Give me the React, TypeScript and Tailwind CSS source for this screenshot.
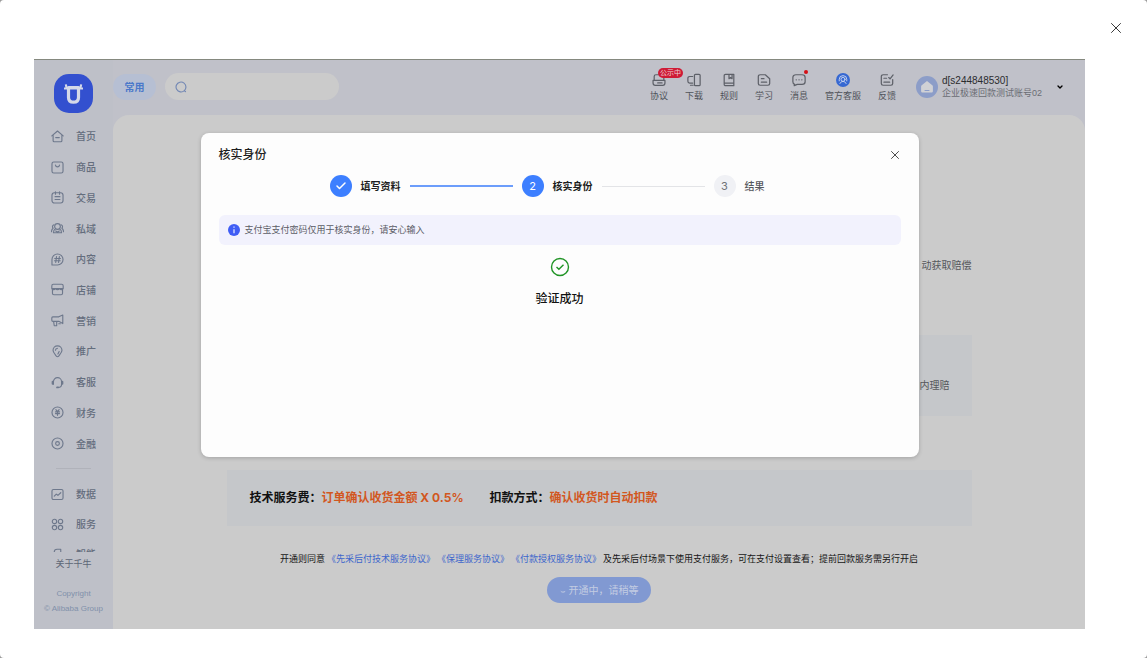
import React from 'react';
import { X, Check, ChevronDown } from 'lucide-react';

interface NavItem {
  label: string;
  icon: React.ReactNode;
}

interface Tool {
  label: string;
  icon: React.ReactNode;
  badge?: string;
  dot?: boolean;
}

const Line: React.FC<{ className?: string; children: React.ReactNode }> = ({ className, children }) => (
  <svg
    viewBox="0 0 16 16"
    fill="none"
    stroke="currentColor"
    strokeWidth="1.4"
    strokeLinecap="round"
    strokeLinejoin="round"
    className={className}
    aria-hidden="true"
  >
    {children}
  </svg>
);

const mainNav: NavItem[] = [
  { label: '首页', icon: <path d="M1 7.2 8 1.2l7 6M2.6 6v7.2c0 .8.6 1.3 1.3 1.3h8.2c.7 0 1.3-.5 1.3-1.3V6M5.8 9.3h4.4" /> },
  { label: '商品', icon: <><rect x="1.2" y="1.2" width="13.6" height="13.6" rx="2.2" /><path d="M5.5 5c.3 1.6 1.2 2.3 2.5 2.3S10.2 6.6 10.5 5" /></> },
  { label: '交易', icon: <><rect x="1.2" y="2.2" width="13.6" height="12.6" rx="3" /><path d="M5.5 1v3M10.5 1v3M5 7h6M5 10.5h6" /></> },
  { label: '私域', icon: <><circle cx="8" cy="5.5" r="3.5" /><path d="M5.6 8.2c-1.7.9-2.6 2.6-2.6 5h10c0-2.4-.9-4.1-2.6-5M3.6 3.4C1.6 4 1.400 6.200 2.600 7.600 1.200 8.600.6 10 .6 12M12.400 3.400c2 .6 2.200 2.800 1 4.200 1.400 1 2 2.400 2 4.400M5.800 11l2.200 1.200 2.200-1.200" /></> },
  { label: '内容', icon: <path d="M1.2 14.8V8A6.800 6.800 0 1 1 8 14.800H1.200M6.800 4.500l-1 7M10.300 4.500l-1 7M4.600 6.700h7M4.300 9.500h7" /> },
  { label: '店铺', icon: <path d="M2.800 1.500h10.400c1 0 1.800 1 1.800 2.200V7H1V3.700c0-1.200.8-2.200 1.800-2.200ZM1.800 8v4.700c0 1 .8 1.800 1.800 1.800h8.800c1 0 1.800-.8 1.800-1.800V8M1 7c1 1.800 3.200 1.800 4.600 0 1.300 1.800 3.500 1.800 4.800 0 1.400 1.800 3.600 1.800 4.600 0" /> },
  { label: '营销', icon: <path d="M14.500 1.200v10.600L9.500 9H7v5.500H4L3.200 9M9.500 3.500l5-2.300M9.500 3.500H2.200C1.400 3.500 1 4 1 4.800v2.900C1 8.500 1.400 9 2.200 9H7M9.500 12h2" /> },
  { label: '推广', icon: <path d="M5.200 11.800C3.500 10 2.500 8.500 2.500 6.600a5.500 5.500 0 0 1 11 0c0 1.900-1 3.400-2.700 5.200-.7.800-.7 2.700-2.800 2.700s-2.100-1.900-2.800-2.700ZM5.500 6.500C5.600 5 6.600 4 8 4M8.500 11l1.500-3" /> },
  { label: '客服', icon: <><path d="M3 10V7a5 5 0 0 1 10 0v3c0 2.500-1.500 4-4 4" /><path strokeWidth="2.4" d="M2 7v2.500M14 7v2.500M7.500 14h1" /></> },
  { label: '财务', icon: <><circle cx="8" cy="8" r="6.8" /><path d="m6 4.500 2 2.500 2-2.500M5.500 7.300h5M5.500 9.300h5M8 7v4.500" /></> },
  { label: '金融', icon: <><circle cx="8" cy="8" r="6.8" /><circle cx="8" cy="8" r="2.3" /></> },
];

const extraNav: NavItem[] = [
  { label: '数据', icon: <><rect x="1.2" y="1.8" width="13.6" height="12.4" rx="1.8" /><path d="m4 10 2.500-2.500 2 1.500L12 5.800" /></> },
  { label: '服务', icon: <><circle cx="4.3" cy="4.3" r="2.7" /><circle cx="11.7" cy="4.3" r="2.7" /><circle cx="4.3" cy="11.7" r="2.7" /><circle cx="11.7" cy="11.7" r="2.7" /></> },
  { label: '智能', icon: <path d="M4 8V5A3.500 3.500 0 0 1 7.500 1.500H12v5.500c0 2-1.500 3-3 3H3M4 14h8" /> },
];

const tools: Tool[] = [
  { label: '协议', badge: '公示中', icon: <path d="M13.500 8V4c0-1.400-.8-2-2-2H4.500c-1.200 0-2 .6-2 2v4M1.200 8.500h13.600v3c0 1.800-.9 2.700-2.500 2.700H3.700c-1.600 0-2.500-.9-2.500-2.700v-3ZM6.500 11.300h5" /> },
  { label: '下载', icon: <><rect x="8.500" y="1.500" width="6.500" height="13" rx="1.200" /><path d="M6.500 4H3C1.800 4 1 4.800 1 6v3.500c0 1.200.8 2 2 2h3.500M4 14h3" /></> },
  { label: '规则', icon: <path d="M4 1.500h9.500v13H4.300c-1.200 0-1.800-.6-1.800-1.700V3c0-1 .6-1.500 1.500-1.500ZM2.500 11.500h11M8 1.500v5l1.800-1.300 1.700 1.300v-5" /> },
  { label: '学习', icon: <path d="M9.500 2h-6c-1.200 0-2 .8-2 2v8c0 1.200.8 2 2 2h9c1.200 0 2-.8 2-2V6.500L9.500 2ZM5 6.500h3M5 10.500h6" /> },
  { label: '消息', dot: true, icon: <><path d="M4.500 2h7C13.600 2 15 3.200 15 5v5c0 1.800-1.400 3-3.500 3H6l-3.500 1.500L3 13c-1.200-.4-2-1.500-2-3V5c0-1.800 1.400-3 3.500-3Z" /><path strokeWidth="1.6" d="M4.800 7.800h.1M8 7.800h.1M11.200 7.800h.1" /></> },
  {
    label: '官方客服',
    icon: (
      <>
        <circle cx="8" cy="8" r="8" fill="#3668d2" stroke="none" />
        <g stroke="#c7d3ee" strokeWidth="1.1">
          <circle cx="8" cy="7.3" r="2.3" />
          <path d="M4.500 12c.6-1.500 1.800-2.300 3.500-2.300s2.900.8 3.500 2.300M3.700 9V7.300a4.300 4.300 0 0 1 8.600 0V9" />
        </g>
      </>
    ),
  },
  { label: '反馈', icon: <path d="M8.500 2h-5c-1.200 0-2 .8-2 2v8c0 1.200.8 2 2 2h9c1.200 0 2-.8 2-2V7.500M4.500 6h3M4.500 10.500h6.500M10 5.200l1.500 1.500L15 2.200" /> },
];

const NavLink: React.FC<{ item: NavItem }> = ({ item }) => (
  <a href="#" className="flex items-center gap-3 pl-[17px] text-[10px] leading-4 font-medium text-[#646d7d]">
    <Line className="w-[13px] h-[13px] text-[#6e788c]">{item.icon}</Line>
    <span>{item.label}</span>
  </a>
);

const Sidebar = () => (
  <aside className="w-[79px] shrink-0 flex flex-col bg-[#bec0c8] pt-[14px] pb-[13px]">
    <svg viewBox="0 0 39 39" className="w-[39px] h-[39px] ml-5" role="img" aria-label="千牛">
      <rect width="39" height="39" rx="15" fill="#3350cf" />
      <g fill="none" stroke="#d5d9e8">
        <path d="M11.800 10.300c.2 2.600 1 4 3 4.200M27.200 10.300c-.2 2.600-1 4-3 4.200M10 14.600h19" strokeWidth="2" />
        <path d="M14.500 13.500h10v10c0 3.200-1.600 4.700-5 4.700s-5-1.500-5-4.700v-10Z" strokeWidth="3.2" strokeLinejoin="round" />
      </g>
    </svg>
    <nav className="grid auto-rows-fr h-[338px] mt-2">
      {mainNav.map((item) => (
        <NavLink key={item.label} item={item} />
      ))}
    </nav>
    <hr className="mt-[9px] mx-[22px] border-[#b0b2ba]" />
    <nav className="grid auto-rows-[30px] h-[73px] mt-[10px] overflow-hidden">
      {extraNav.map((item) => (
        <NavLink key={item.label} item={item} />
      ))}
    </nav>
    <a href="#" className="mt-[5px] text-center text-[9px] leading-[14px] text-[#5d6676]">关于千牛</a>
    <p className="mt-[15px] text-center font-['Liberation_Sans',sans-serif] text-[8px] leading-[15px] whitespace-nowrap text-[#8190aa]">
      Copyright
      <br />© Alibaba Group
    </p>
  </aside>
);

const Header = () => (
  <header className="h-[55px] shrink-0 flex items-center pb-[2px]">
    <button className="w-[43px] h-[26px] rounded-full bg-[#b6bfd3] text-[10px] leading-4 font-bold text-[#4a78ca]">
      常用
    </button>
    <label className="flex items-center w-[174px] h-[27px] ml-[9px] pl-[10px] rounded-full bg-[#cbcbcb]">
      <Line className="w-3 h-3 shrink-0 text-[#7287b4]">
        <path strokeWidth="1.5" d="M12.500 12.800A6.600 6.600 0 1 1 14.600 8c0 2-.8 3.600-2.100 4.800Zm0 0 1.500 1.500" />
      </Line>
      <input type="text" aria-label="搜索" className="w-full min-w-0 px-2 text-[10px] bg-transparent outline-none" />
    </label>
    <div className="ml-auto pt-[3px] flex gap-[17px]">
      {tools.map((tool) => (
        <button key={tool.label} className="relative flex flex-col items-center gap-[2px] text-[9px] leading-[14px] text-[#50535a]">
          <Line className="w-[14px] h-[14px] text-[#5d6068]">{tool.icon}</Line>
          <span>{tool.label}</span>
          {tool.badge && (
            <span className="absolute -top-[5px] left-2 px-[2px] rounded-full bg-[#cf1a36] text-[7px] leading-[10px] whitespace-nowrap text-[#eccdd2]">
              {tool.badge}
            </span>
          )}
          {tool.dot && <span className="absolute -top-[3px] right-0 w-1 h-1 rounded-full bg-[#d40f16]" />}
        </button>
      ))}
    </div>
    <button className="flex items-center ml-5 mr-[21px] text-left">
      <svg viewBox="0 0 22 22" className="w-[22px] h-[22px]" aria-hidden="true">
        <circle cx="11" cy="11" r="11" fill="#8c9dc8" />
        <path d="m11 5 5.300 4.300c.4.300.6.700.6 1.200V15c0 1-.6 1.500-1.500 1.500H6.600c-.9 0-1.500-.5-1.500-1.500v-4.500c0-.5.200-.9.600-1.200L11 5Z" fill="#d0d1d5" />
        <path d="M9 14.500h4" stroke="#8c9dc8" strokeLinecap="round" />
      </svg>
      <span className="ml-1 w-[114px] font-['Liberation_Sans','Noto_Sans_CJK_SC',sans-serif] text-[9px] leading-[13px] text-[#6b6d74]">
        <span className="block text-[10px] text-[#2b2c2f]">d[s244848530]</span>
        企业极速回款测试账号02
      </span>
      <ChevronDown className="w-2 h-2 text-black" strokeWidth={4} />
    </button>
  </header>
);

const Content = () => (
  <main className="flex-1 rounded-t-[16px] bg-[#cbcbcb] text-[#55575b]">
    <div className="max-w-[745px] mx-auto pt-[142px]">
      <p className="text-right text-[10px] leading-4">动获取赔偿</p>
      <div className="flex items-center justify-end h-[81px] mt-[62px] pt-[18px] pr-[22px] bg-[#c5c7ca] text-[10px] leading-4">
        内理赔
      </div>
      <div className="flex items-center gap-[26px] h-14 mt-[54px] px-[23px] bg-[#c5c7ca] text-[12px] leading-4 font-bold text-[#111]">
        <p>
          技术服务费：<span className="text-[#d2571f]">订单确认收货金额 X 0.5%</span>
        </p>
        <p>
          扣款方式：<span className="text-[#d2571f]">确认收货时自动扣款</span>
        </p>
      </div>
      <p className="flex justify-center gap-[2px] mt-[26px] text-[9px] leading-[14px] whitespace-nowrap text-[#161616]">
        <span>开通则同意</span>
        <a href="#" className="text-[#3d66cb]">《先采后付技术服务协议》</a>
        <a href="#" className="text-[#3d66cb]">《保理服务协议》</a>
        <a href="#" className="text-[#3d66cb]">《付款授权服务协议》</a>
        <span>及先采后付场景下使用支付服务，可在支付设置查看；提前回款服务需另行开启</span>
      </p>
      <button className="flex items-center justify-center gap-[3px] w-[104px] h-[26px] mt-[11px] mx-auto rounded-full bg-[#8199d2] text-[10px] leading-4 text-[#c3cce2]">
        <svg viewBox="0 0 6 6" className="w-[6px] h-[6px]" fill="none" stroke="currentColor" aria-hidden="true">
          <path d="M.8 4.200c1 1.200 3 1.200 4.400.2" />
        </svg>
        开通中，请稍等
      </button>
    </div>
  </main>
);

const steps = [
  { label: '填写资料', state: 'done' },
  { label: '核实身份', state: 'active' },
  { label: '结果', state: 'pending' },
];

const Steps = () => (
  <ol className="flex items-center justify-center gap-[9px] pr-[25px] text-[10px] leading-4">
    {steps.map((step, i) => (
      <React.Fragment key={step.label}>
        {i > 0 && (
          <li aria-hidden="true" className={`w-[103px] ${i === 1 ? 'h-[2px] bg-[#6c9dfb]' : 'h-px bg-[#e3e4e7]'}`} />
        )}
        <li className="flex items-center gap-[9px]">
          <span
            className={`flex items-center justify-center w-[22px] h-[22px] rounded-full text-[11px] ${
              step.state === 'pending' ? 'bg-[#f0f1f5] text-[#6d7077]' : 'bg-[#3d7fff] text-white'
            }`}
          >
            {step.state === 'done' ? <Check className="w-3 h-3" strokeWidth={3} /> : i + 1}
          </span>
          <span className={step.state === 'pending' ? 'font-medium text-[#55575c]' : 'font-bold text-[#1c1d20]'}>
            {step.label}
          </span>
        </li>
      </React.Fragment>
    ))}
  </ol>
);

const VerifyDialog = () => (
  <div className="absolute inset-x-0 top-[73px] flex justify-center">
    <section
      role="dialog"
      aria-labelledby="verify-title"
      className="w-[718px] h-[324px] px-[18px] pt-[14px] rounded-lg bg-[#fdfdfd] shadow-[0_1px_4px_rgba(0,0,0,0.2)]"
    >
      <div className="flex items-center justify-between">
        <h2 id="verify-title" className="text-[12px] leading-4 font-medium text-[#1d1e20]">核实身份</h2>
        <button aria-label="关闭">
          <X className="w-[14px] h-[14px] -mr-px text-[#333]" strokeWidth={1.5} />
        </button>
      </div>
      <div className="mt-3">
        <Steps />
      </div>
      <div className="flex items-center gap-[5px] h-[30px] mt-[18px] pl-[9px] rounded-md bg-[#f2f2fd] text-[9px] leading-[14px] text-[#5b5c66]">
        <svg viewBox="0 0 12 12" className="w-3 h-3" aria-hidden="true">
          <circle cx="6" cy="6" r="6" fill="#3f5df5" />
          <path d="M6 5.200v4M6 2.600v1.200" stroke="#dfe4ff" strokeWidth="1.3" />
        </svg>
        支付宝支付密码仅用于核实身份，请安心输入
      </div>
      <div className="flex flex-col items-center mt-3">
        <svg viewBox="0 0 20 20" className="w-5 h-5" fill="none" stroke="#219426" strokeWidth="1.4" aria-hidden="true">
          <circle cx="10" cy="10" r="8.5" />
          <path d="m6.500 10 2.400 2.300 4.600-4.500" />
        </svg>
        <p className="mt-[14px] text-[12px] leading-4 font-medium text-[#111]">验证成功</p>
      </div>
    </section>
  </div>
);

const App: React.FC = () => {
  return (
    <div className="bg-[#9a9a9a] font-['Inter','Noto_Sans_CJK_SC',sans-serif]">
      <div className="relative min-h-screen flex flex-col pt-[59px] pr-[62px] pb-[29px] pl-[34px] rounded-[4px] bg-white">
        <button aria-label="关闭预览" className="absolute top-[19px] right-[22px]">
          <X className="w-[18px] h-[18px] text-[#333]" strokeWidth={1.3} />
        </button>
        <div className="relative flex-1 flex border-t border-[#85897f] bg-[#c0c1c9]">
          <Sidebar />
          <div className="flex-1 min-w-0 flex flex-col">
            <Header />
            <Content />
          </div>
          <VerifyDialog />
        </div>
      </div>
    </div>
  );
};

export default App;
